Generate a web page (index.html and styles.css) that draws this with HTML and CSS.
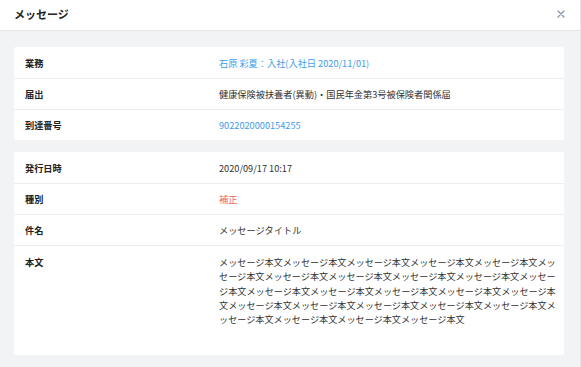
FILE: index.html
```html
<!DOCTYPE html>
<html lang="ja">
<head>
  <meta charset="UTF-8">
  <meta name="viewport" content="width=device-width, initial-scale=1.0">
  <title>メッセージ</title>
  <link rel="stylesheet" href="styles.css">
</head>
<body>
  <div class="dialog">
    <div class="header">
      <span class="title">メッセージ</span>
      <span class="close">
        <svg width="8" height="8" viewBox="0 0 8 8">
          <path d="M1 1 L7 7 M7 1 L1 7" stroke="#8796aa" stroke-width="1.3" stroke-linecap="round"/>
        </svg>
      </span>
    </div>

    <div class="content">
      <div class="card">
        <div class="row">
          <div class="label">業務</div>
          <div class="value link">石原 彩夏：入社(入社日 2020/11/01)</div>
        </div>
        <div class="row">
          <div class="label">届出</div>
          <div class="value">健康保険被扶養者(異動)・国民年金第3号被保険者関係届</div>
        </div>
        <div class="row">
          <div class="label">到達番号</div>
          <div class="value link">9022020000154255</div>
        </div>
      </div>

      <div class="card">
        <div class="row">
          <div class="label">発行日時</div>
          <div class="value">2020/09/17 10:17</div>
        </div>
        <div class="row">
          <div class="label">種別</div>
          <div class="value alert">補正</div>
        </div>
        <div class="row">
          <div class="label">件名</div>
          <div class="value">メッセージタイトル</div>
        </div>
        <div class="row row-body">
          <div class="label">本文</div>
          <div class="value body-text">メッセージ本文メッセージ本文メッセージ本文メッセージ本文メッセージ本文メッセージ本文メッセージ本文メッセージ本文メッセージ本文メッセージ本文メッセージ本文メッセージ本文メッセージ本文メッセージ本文メッセージ本文メッセージ本文メッセージ本文メッセージ本文メッセージ本文メッセージ本文メッセージ本文メッセージ本文メッセージ本文メッセージ本文メッセージ本文</div>
        </div>
      </div>
    </div>
  </div>
</body>
</html>
```

FILE: styles.css
```css
* {
  margin: 0;
  padding: 0;
  box-sizing: border-box;
}

body {
  width: 581px;
  height: 367px;
  font-family: "Noto Sans CJK JP", "Noto Sans", sans-serif;
  background: #f2f3f5;
  color: #333;
  overflow: hidden;
}

.dialog {
  height: 100%;
  display: flex;
  flex-direction: column;
  border-right: 1px solid #e3e6ea;
}

.header {
  height: 31px;
  flex-shrink: 0;
  display: flex;
  align-items: center;
  justify-content: space-between;
  padding: 0 15px 2px 14px;
  background: white;
  border-bottom: 1px solid #e2e6eb;
}

.title {
  font-size: 11px;
  font-weight: 700;
  color: #222;
}

.close {
  display: flex;
  align-items: center;
}

.content {
  padding: 16px 16px 12px 14px;
  display: flex;
  flex-direction: column;
  gap: 12px;
}

.card {
  background: white;
  border-radius: 2px;
}

.row {
  display: grid;
  grid-template-columns: 194px 1fr;
  align-items: center;
  height: 31px;
  padding: 0 5px 0 11px;
  font-size: 9.2px;
}

.row + .row {
  border-top: 1px solid #eceef1;
}

.label {
  font-weight: 700;
  color: #222;
}

.value {
  color: #333;
}

.link {
  color: #3d9be8;
}

.alert {
  color: #f4646a;
}

.row.row-body {
  height: 110px;
  align-items: start;
  padding-top: 11px;
}

.body-text {
  font-size: 9.15px;
  line-height: 14.3px;
  margin-top: -2px;
}

.row-body .label {
  line-height: 14.3px;
  margin-top: -2px;
}
```
